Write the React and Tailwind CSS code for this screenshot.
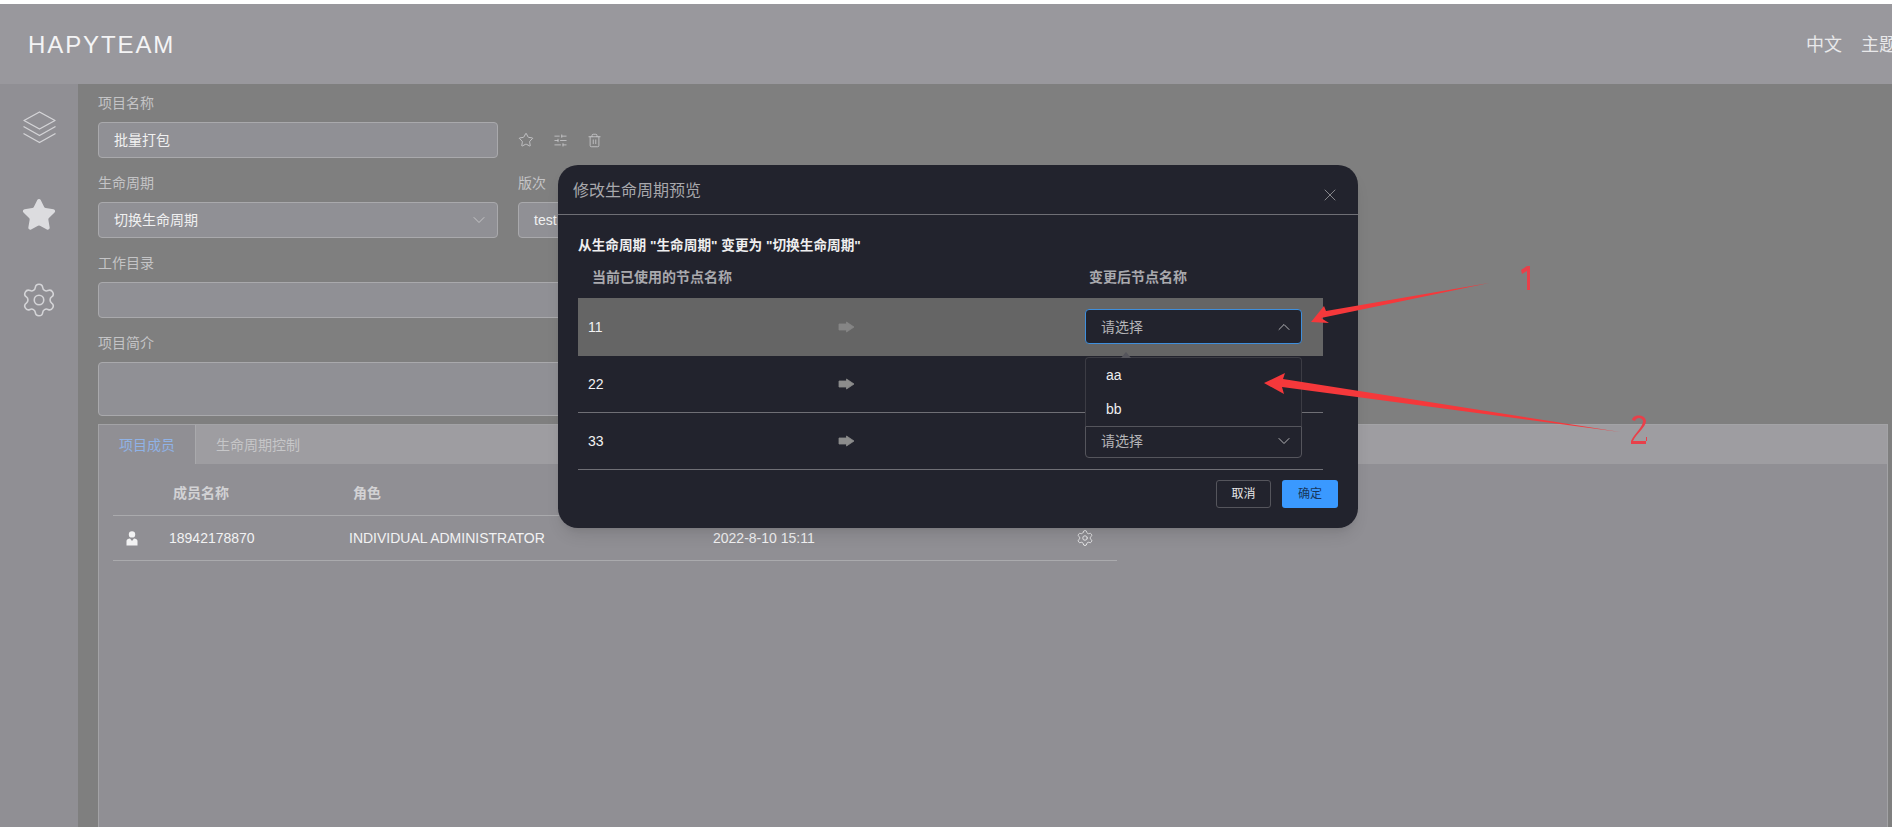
import React from 'react';
import { ChevronDown, ChevronUp, Settings, SlidersHorizontal, Star, Trash2, X } from 'lucide-react';

const font = "font-['Liberation_Sans','Noto_Sans_CJK_SC',sans-serif]";

const LayersIcon = () => (
  <svg width="35" height="33" viewBox="0 0 35 33" fill="none" stroke="#d4d4d7" strokeWidth="1.4" strokeLinejoin="round">
    <path d="M17.5 1 L33 9.5 L17.5 18 L2 9.5 Z" />
    <path d="M1.5 15.5 L17.5 24.5 L33.5 15.5" />
    <path d="M1.5 22.5 L17.5 31.5 L33.5 22.5" />
  </svg>
);

const PersonIcon = () => (
  <svg width="12" height="15" viewBox="0 0 12 15" fill="#f2f2f3">
    <circle cx="6" cy="3.4" r="3.2" />
    <path d="M0.5 14.5 V10 C0.5 8.4 2 7.6 4 7.4 L6 10 L8 7.4 C10 7.6 11.5 8.4 11.5 10 V14.5 Z" />
  </svg>
);

const ArrowIcon = ({ color }) => (
  <svg width="17" height="12" viewBox="0 0 17 12" fill={color} stroke={color} strokeWidth="0.8" strokeLinejoin="round">
    <path d="M1 3 H8.5 V1 L16 6 L8.5 11 V9 H1 Z" />
  </svg>
);

const Field = ({ label, children }) => (
  <div className="flex flex-col">
    <span className="h-[30px] leading-[22px] text-sm text-[#c4c4c6]">{label}</span>
    {children}
  </div>
);

const boxClass = 'h-9 rounded border border-[#a9a9ac] bg-[#909095] text-sm text-[#f0f0f1] flex items-center px-[15px]';

const rows = [
  { name: '11', active: true },
  { name: '22' },
  { name: '33' },
];

const Dialog = () => (
  <div className="absolute left-[558px] top-[165px] w-[800px] h-[363px] rounded-[20px] bg-[#22232d] shadow-lg">
    <div className="relative h-[50px] border-b border-[#6f6f75] pl-[15px] pt-[14px] text-base leading-6 text-[#a8a8ac]">
      修改生命周期预览
      <X className="absolute right-[18px] top-[20px] w-5 h-5 text-[#8f8f94]" strokeWidth={1.1} />
    </div>
    <div className="px-5 pt-[21px]">
      <p className="text-[13.65px] leading-5 font-bold text-[#eeeeef]">从生命周期 "生命周期" 变更为 "切换生命周期"</p>
      <div className="flex h-[42px] items-center text-sm font-bold text-[#a9a9ad]">
        <span className="w-[511px] pl-[14px]">当前已使用的节点名称</span>
        <span>变更后节点名称</span>
      </div>
      <div className="w-[745px]">
        {rows.map((row) => (
          <div
            key={row.name}
            className={`flex h-[57px] items-center text-sm text-[#f2f2f3] ${row.active ? 'bg-[#656565] h-[58px]' : 'border-b border-[#6f6f75]'}`}
          >
            <span className="w-[260px] pl-[10px]">{row.name}</span>
            <span className="w-[247px]">
              <ArrowIcon color={row.active ? '#858585' : '#8c8c8c'} />
            </span>
            <div
              className={`mb-px w-[217px] h-[35px] rounded flex items-center justify-between pl-[15px] pr-[7px] bg-[#22232d] text-[#b4b4b7] border ${row.active ? 'border-[#3f8fdc]' : 'border-[#55555c]'}`}
            >
              请选择
              {row.active ? (
                <ChevronUp className="w-5 h-5" strokeWidth={1.2} />
              ) : (
                <ChevronDown className="w-5 h-5" strokeWidth={1.2} />
              )}
            </div>
          </div>
        ))}
      </div>
      <div className="flex justify-end gap-[11px] pt-[10px]">
        <button className="w-[55px] h-[28px] rounded-[3px] border border-[#55555c] text-xs text-[#e8e8e9]">取消</button>
        <button className="w-[56px] h-[28px] rounded-[3px] bg-[#3a99ff] text-xs text-[#17365c]">确定</button>
      </div>
    </div>
    {/* open dropdown, covers row 2 and most of row 3 */}
    <div className="absolute left-[527px] top-[192px] w-[217px] h-[70px] rounded-t border border-b-[#55555c] border-[#3c3c44] bg-[#22232d] pl-[20px] text-sm text-[#eeeeef]">
      <div className="h-[34px] leading-[34px]">aa</div>
      <div className="h-[34px] leading-[34px]">bb</div>
      <span className="absolute left-[35px] top-[-6px] w-0 h-0 border-x-[5px] border-x-transparent border-b-[6px] border-b-[#55555c]" />
    </div>
  </div>
);

// red arrows and numbers drawn on top of the screenshot
const Annotations = () => (
  <svg className="absolute left-0 top-0" width="1892" height="827" fill="#f5383b">
    <path d="M1489 283 L1321 318 L1329 323 L1311 322 L1324 306 L1326 311 Z" />
    <path d="M1620 432 L1283 379 L1285 373 L1264 383 L1284 394 L1282 387 Z" />
    <path d="M1521 270 L1527 266 H1530 V290 H1527 V271 L1522 274 Z" fill="#e8404a" />
    <path d="M1632 420 C1633 414 1645 414 1646 421 C1646 427 1637 433 1633 441 H1647 V437 H1646 V444 H1631 V441 C1635 433 1643 427 1643 421 C1642 417 1636 417 1635 421 Z" fill="#e8404a" />
  </svg>
);

const App = () => (
  <div className={`relative h-screen overflow-hidden bg-white pt-1 ${font}`}>
    <header className="flex h-[80px] items-center justify-between bg-[#99989d] pl-7 pt-px">
      <span className="text-2xl tracking-[1.9px] text-[#f4f4f5]">HAPYTEAM</span>
      <div className="flex gap-[19px] w-[86px] shrink-0 overflow-hidden whitespace-nowrap text-lg text-[#e8e8ea]">
        <span>中文</span>
        <span>主题</span>
      </div>
    </header>
    <div className="flex h-[743px]">
      <aside className="flex w-[78px] flex-col items-center bg-[#908f94] pt-[27px]">
        <LayersIcon />
        <Star className="mt-[53px] w-9 h-9 text-[#dcdcdf]" fill="#dcdcdf" strokeWidth={1.5} />
        <Settings className="mt-[48px] w-[38px] h-[38px] text-[#d4d4d7]" strokeWidth={1} />
      </aside>
      <main className="flex-1 bg-[#7f7f7f] pl-5 pr-1 pt-2">
        <Field label="项目名称">
          <div className="flex items-center">
            <div className={`${boxClass} w-[400px]`}>批量打包</div>
            <div className="flex gap-[19px] pl-5 text-[#d0d0d3]">
              <Star className="w-4 h-4" strokeWidth={1.2} />
              <SlidersHorizontal className="w-[15px] h-[15px] mt-px" strokeWidth={1.2} />
              <Trash2 className="w-[15px] h-[15px] mt-px" strokeWidth={1.2} />
            </div>
          </div>
        </Field>
        <div className="flex gap-5 pt-[14px]">
          <Field label="生命周期">
            <div className={`${boxClass} w-[400px] justify-between pr-2`}>
              切换生命周期
              <ChevronDown className="w-5 h-5 text-[#c8c8cb]" strokeWidth={1.1} />
            </div>
          </Field>
          <Field label="版次">
            <div className={`${boxClass} w-[400px]`}>test</div>
          </Field>
        </div>
        <div className="pt-[14px]">
          <Field label="工作目录">
            <div className={`${boxClass} w-[820px]`} />
          </Field>
        </div>
        <div className="pt-[14px]">
          <Field label="项目简介">
            <div className={`${boxClass} w-[820px] h-[54px]`} />
          </Field>
        </div>
        <section className="mt-[8px] h-[420px] border border-[#a3a3a6] bg-[#908f94]">
          <div className="flex h-[39px] bg-[#9e9da1] text-sm">
            <div className="flex w-[97px] items-center justify-center border-r border-[#a9a9ac] bg-[#908f94] text-[#8fb2e6]">项目成员</div>
            <div className="flex items-center pl-5 text-[#c6c6c8]">生命周期控制</div>
          </div>
          <div className="ml-[14px] w-[1004px] text-sm">
            <div className="flex h-[52px] items-center border-b border-[#aaaaad] pt-[7px] font-bold text-[#d2d2d4]">
              <span className="w-[60px]" />
              <span className="w-[180px]">成员名称</span>
              <span>角色</span>
            </div>
            <div className="flex h-[45px] items-center border-b border-[#aaaaad] text-[#f2f2f3]">
              <span className="w-[56px] pl-[13px]"><PersonIcon /></span>
              <span className="w-[180px]">18942178870</span>
              <span className="w-[364px]">INDIVIDUAL ADMINISTRATOR</span>
              <span className="w-[363px]">2022-8-10 15:11</span>
              <Settings className="w-[18px] h-[18px] text-[#eeeeef]" strokeWidth={1.2} />
            </div>
          </div>
        </section>
      </main>
    </div>
    <Dialog />
    <Annotations />
  </div>
);

export default App;
